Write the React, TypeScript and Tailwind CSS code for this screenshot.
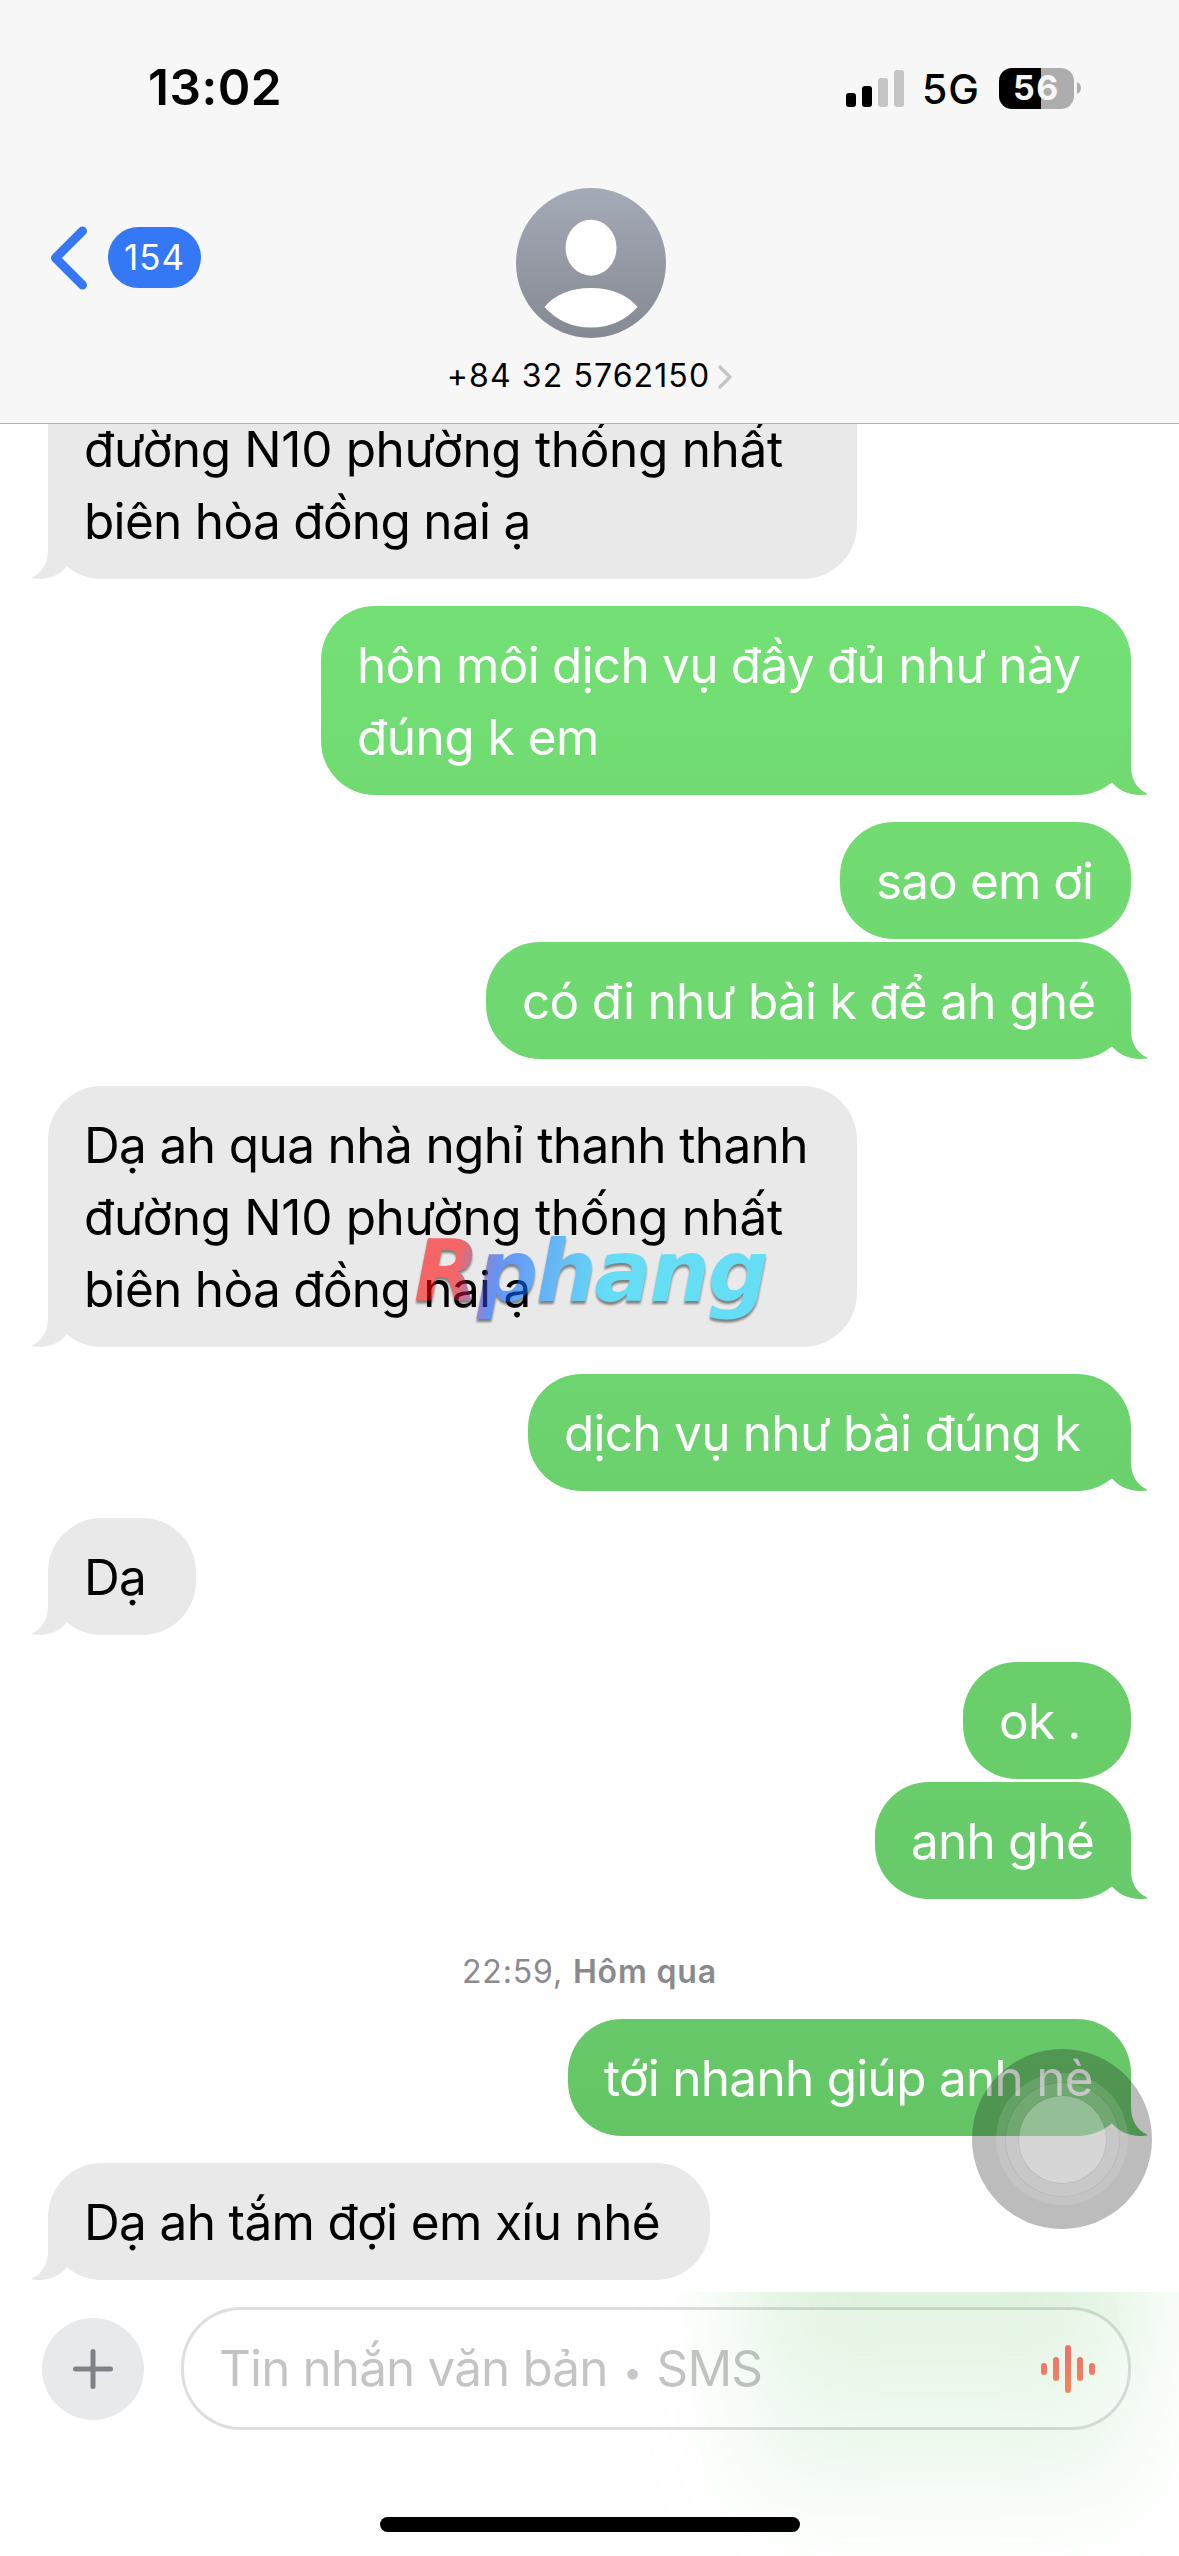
import React from "react";

type Line = { text: string; tracking: string };

type Message = {
  from: "me" | "them";
  lines: Line[];
  width: string;
  margin: string;
  tail?: boolean;
  fill?: string;
  tailColor?: string;
  clipped?: boolean;
};

const beforeStamp: Message[] = [
  {
    from: "them",
    width: "w-[809px]",
    margin: "-mt-[11px]",
    tail: true,
    clipped: true,
    lines: [
      { text: "đường N10 phường thống nhất", tracking: "tracking-[-0.33px]" },
      { text: "biên hòa đồng nai ạ", tracking: "tracking-[-0.69px]" },
    ],
  },
  {
    from: "me",
    width: "w-[810px]",
    margin: "mt-[27px]",
    tail: true,
    fill: "from-[#73e075] to-[#71db72]",
    tailColor: "text-[#71db72]",
    lines: [
      { text: "hôn môi dịch vụ đầy đủ như này", tracking: "tracking-[-0.75px]" },
      { text: "đúng k em", tracking: "tracking-[-0.5px]" },
    ],
  },
  {
    from: "me",
    width: "w-[291px]",
    margin: "mt-[27px]",
    fill: "from-[#71db72] to-[#70d971]",
    lines: [{ text: "sao em ơi", tracking: "tracking-[-0.9px]" }],
  },
  {
    from: "me",
    width: "w-[645px]",
    margin: "mt-[3px]",
    tail: true,
    fill: "from-[#70d971] to-[#6ed770]",
    tailColor: "text-[#6ed770]",
    lines: [{ text: "có đi như bài k để ah ghé", tracking: "tracking-[-0.7px]" }],
  },
  {
    from: "them",
    width: "w-[809px]",
    margin: "mt-[27px]",
    tail: true,
    lines: [
      { text: "Dạ ah qua nhà nghỉ thanh thanh", tracking: "tracking-[-0.61px]" },
      { text: "đường N10 phường thống nhất", tracking: "tracking-[-0.33px]" },
      { text: "biên hòa đồng nai ạ", tracking: "tracking-[-0.69px]" },
    ],
  },
  {
    from: "me",
    width: "w-[603px]",
    margin: "mt-[27px]",
    tail: true,
    fill: "from-[#6dd46f] to-[#6bd16d]",
    tailColor: "text-[#6bd16d]",
    lines: [{ text: "dịch vụ như bài đúng k", tracking: "tracking-[-0.74px]" }],
  },
  {
    from: "them",
    width: "w-[148px]",
    margin: "mt-[27px]",
    tail: true,
    lines: [{ text: "Dạ", tracking: "tracking-[-0.82px]" }],
  },
  {
    from: "me",
    width: "w-[168px]",
    margin: "mt-[27px]",
    fill: "from-[#69cf6b] to-[#69cd6a]",
    lines: [{ text: "ok .", tracking: "tracking-[-0.8px]" }],
  },
  {
    from: "me",
    width: "w-[256px]",
    margin: "mt-[3px]",
    tail: true,
    fill: "from-[#69cd6a] to-[#68ca6a]",
    tailColor: "text-[#68ca6a]",
    lines: [{ text: "anh ghé", tracking: "tracking-[-0.8px]" }],
  },
];

const afterStamp: Message[] = [
  {
    from: "me",
    width: "w-[563px]",
    margin: "mt-0",
    tail: true,
    fill: "from-[#67c969] to-[#65c566]",
    tailColor: "text-[#65c566]",
    lines: [{ text: "tới nhanh giúp anh nè", tracking: "tracking-[-0.72px]" }],
  },
  {
    from: "them",
    width: "w-[662px]",
    margin: "mt-[27px]",
    tail: true,
    lines: [{ text: "Dạ ah tắm đợi em xíu nhé", tracking: "tracking-[-0.64px]" }],
  },
];

function Tail({ className }: { className: string }) {
  return (
    <svg viewBox="0 0 48 62" className={`absolute bottom-0 h-[62px] w-[48px] ${className}`} fill="currentColor">
      <path d="M31 4V33C31 46 37 56 47 60.6C48 61.5 47 62 40 62C28.500 62 19 57.500 12 49.600L10 36Z" />
    </svg>
  );
}

function Bubble({ message }: { message: Message }) {
  const mine = message.from === "me";
  const side = mine ? "self-end text-white bg-linear-to-b" : "self-start bg-[#e9e9e9] text-black";
  const shape = message.clipped ? "rounded-b-[54px]" : "rounded-[54px] pt-[23px]";
  return (
    <div className={`relative pb-[22px] pl-[36px] ${side} ${shape} ${message.fill ?? ""} ${message.width} ${message.margin}`}>
      {message.tail && (
        <Tail className={mine ? `-right-[17px] ${message.tailColor ?? ""}` : "-left-[17px] -scale-x-100 text-[#e9e9e9]"} />
      )}
      {message.lines.map((line) => (
        <div key={line.text} className={`relative h-[72px] text-[49.5px] leading-[72px] whitespace-nowrap ${line.tracking}`}>
          {line.text}
        </div>
      ))}
    </div>
  );
}

function StatusBar() {
  return (
    <div className="flex h-[176px] items-center justify-between pr-[98px] pl-[148px]">
      <span className="text-[49.5px] leading-none font-semibold tracking-[0.5px]">13:02</span>
      <div className="flex items-center">
        <svg viewBox="0 0 58 37" className="h-[37px] w-[58px]">
          <rect x="0" y="23" width="10" height="14" rx="3" />
          <rect x="16" y="16" width="10" height="21" rx="3" />
          <rect x="32" y="8" width="10" height="29" rx="3" fill="#c5c5c5" />
          <rect x="48" y="0" width="10" height="37" rx="3" fill="#c5c5c5" />
        </svg>
        <span className="mt-[3px] ml-[18px] w-[77px] text-[41px] leading-none font-[450] tracking-[1px]">5G</span>
        <div className="flex h-[41px] w-[75px] items-center justify-center rounded-[13px] bg-linear-to-r from-black from-[56%] to-[#adadad] to-[56%]">
          <span className="text-[34px] leading-none font-bold tracking-[1.6px] text-[#f7f7f7]">56</span>
        </div>
        <svg viewBox="0 0 4 12" className="ml-[3px] h-[12px] w-[4px]">
          <path d="M0 0C2.500 1 4 3.500 4 6S2.500 11 0 12Z" fill="#adadad" />
        </svg>
      </div>
    </div>
  );
}

function Header() {
  return (
    <header className="relative h-[424px] shrink-0 border-b border-[#b0b0b1] bg-[#f7f7f7]">
      <StatusBar />
      <div className="grid grid-cols-[1fr_auto_1fr]">
        <div className="mt-[51px] flex h-[61px] items-center pl-[48px]">
          <svg viewBox="0 0 42 64" className="h-[64px] w-[42px]" fill="none" stroke="#3478f6" strokeWidth="9" strokeLinecap="round" strokeLinejoin="round">
            <path d="M34.500 5L7.500 32L34.500 59" />
          </svg>
          <span className="ml-[18px] flex h-[61px] w-[93px] items-center justify-center rounded-full bg-[#3478f6] text-[35px] font-[380] tracking-[1px] text-white">
            154
          </span>
        </div>
        <div className="mt-[12px] flex flex-col items-center">
          <svg viewBox="0 0 150 150" className="ml-[2px] h-[150px] w-[150px]">
            <defs>
              <linearGradient id="avatar" x1="0" y1="0" x2="0" y2="1">
                <stop offset="0" stopColor="#a5aab8" />
                <stop offset="1" stopColor="#858992" />
              </linearGradient>
            </defs>
            <circle cx="75" cy="75" r="75" fill="url(#avatar)" />
            <ellipse cx="75" cy="59.700" rx="25.500" ry="28" fill="#fff" />
            <path d="M28.500 119C38 107 55 100 75 100S112 107 121.500 119C110 132 94 139.500 75 139.500S40 132 28.500 119Z" fill="#fff" />
          </svg>
          <div className="mt-[14px] flex h-[48px] items-center">
            <span className="text-[32px] tracking-[1.1px] whitespace-nowrap">+84 32 5762150</span>
            <svg viewBox="0 0 14 24" className="mt-[2px] ml-[8px] h-[24px] w-[14px]" fill="none" stroke="#c4c4c6" strokeWidth="3.200" strokeLinecap="round" strokeLinejoin="round">
              <path d="M2 2L12 12L2 22" />
            </svg>
          </div>
        </div>
        <div />
      </div>
    </header>
  );
}

function Watermark() {
  return (
    <div className="absolute top-[798px] left-[414px] opacity-[0.56] drop-shadow-[0_3px_1px_rgba(0,0,0,0.8)]">
      <span className="block bg-linear-[100deg] from-[#ff0000] from-[13%] via-[#0050ff] via-[24%] to-[#00d4ff] to-[54%] bg-clip-text pr-[10px] font-['DejaVu_Sans'] text-[85px] leading-[100px] font-bold tracking-[-2.14px] text-transparent italic">
        Rphang
      </span>
    </div>
  );
}

function TouchButton() {
  return (
    <div className="absolute top-[2049px] left-[972px] flex size-[180px] items-center justify-center rounded-full bg-[#232624]/31">
      <div className="flex size-[132px] items-center justify-center rounded-full bg-white/12">
        <div className="flex size-[113px] items-center justify-center rounded-full bg-white/8 ring-1 ring-black/5">
          <div className="size-[87px] rounded-full bg-white/25 ring-1 ring-black/5" />
        </div>
      </div>
    </div>
  );
}

function Composer() {
  return (
    <footer className="relative h-[264px] shrink-0 overflow-hidden bg-white">
      <div className="absolute -top-[60px] left-[745px] h-[300px] w-[390px] bg-linear-to-b from-[#65c566]/26 from-[20%] to-[#65c566]/2 blur-[50px]" />
      <div className="relative flex items-center pt-[15px] pl-[42px]">
        <div className="flex size-[102px] items-center justify-center rounded-full bg-[#e8e9eb]">
          <svg viewBox="0 0 40 40" className="size-[40px]" stroke="#808087" strokeWidth="5" strokeLinecap="round">
            <path d="M20 2.500V37.500M2.500 20H37.500" />
          </svg>
        </div>
        <div className="ml-[37px] flex h-[123px] w-[950px] items-center justify-between rounded-[60px] border-3 border-black/13 bg-white/25 pr-[33px] pl-[35px]">
          <span className="flex items-center text-[49.5px] tracking-[-0.9px] whitespace-pre text-black/23">
            <span>Tin nhắn văn bản</span>
            <span className="w-[49px] pt-[6px] text-center text-[34px]">•</span>
            <span>SMS</span>
          </span>
          <svg viewBox="0 0 54 48" className="h-[48px] w-[54px]">
            <defs>
              <linearGradient id="wave" gradientUnits="userSpaceOnUse" x1="0" y1="0" x2="0" y2="48">
                <stop offset="0" stopColor="#f0706b" />
                <stop offset="0.500" stopColor="#ef7a66" />
                <stop offset="1" stopColor="#ef8a5c" />
              </linearGradient>
            </defs>
            <g fill="url(#wave)">
              <rect x="0" y="18" width="6" height="12" rx="3" />
              <rect x="12" y="12" width="6" height="24" rx="3" />
              <rect x="24" y="0" width="6" height="48" rx="3" />
              <rect x="36" y="12" width="6" height="24" rx="3" />
              <rect x="48" y="18" width="6" height="12" rx="3" />
            </g>
          </svg>
        </div>
      </div>
      <div className="relative mx-auto mt-[87px] h-[15px] w-[420px] rounded-full bg-black" />
    </footer>
  );
}

export default function App() {
  return (
    <div className="relative flex h-[2556px] w-[1179px] flex-col overflow-hidden bg-white font-['Inter','Liberation_Sans',sans-serif] text-black">
      <Header />
      <main className="relative flex h-[1868px] shrink-0 flex-col overflow-hidden pr-[48px] pl-[48px]">
        {beforeStamp.map((message, index) => (
          <Bubble key={index} message={message} />
        ))}
        <div className="flex h-[120px] items-center justify-center pt-[25px] text-[32px] tracking-[0.85px] whitespace-pre text-[#8a8a8e]">
          <span>22:59, </span>
          <span className="font-semibold">Hôm qua</span>
        </div>
        {afterStamp.map((message, index) => (
          <Bubble key={index} message={message} />
        ))}
        <Watermark />
      </main>
      <Composer />
      <TouchButton />
    </div>
  );
}
